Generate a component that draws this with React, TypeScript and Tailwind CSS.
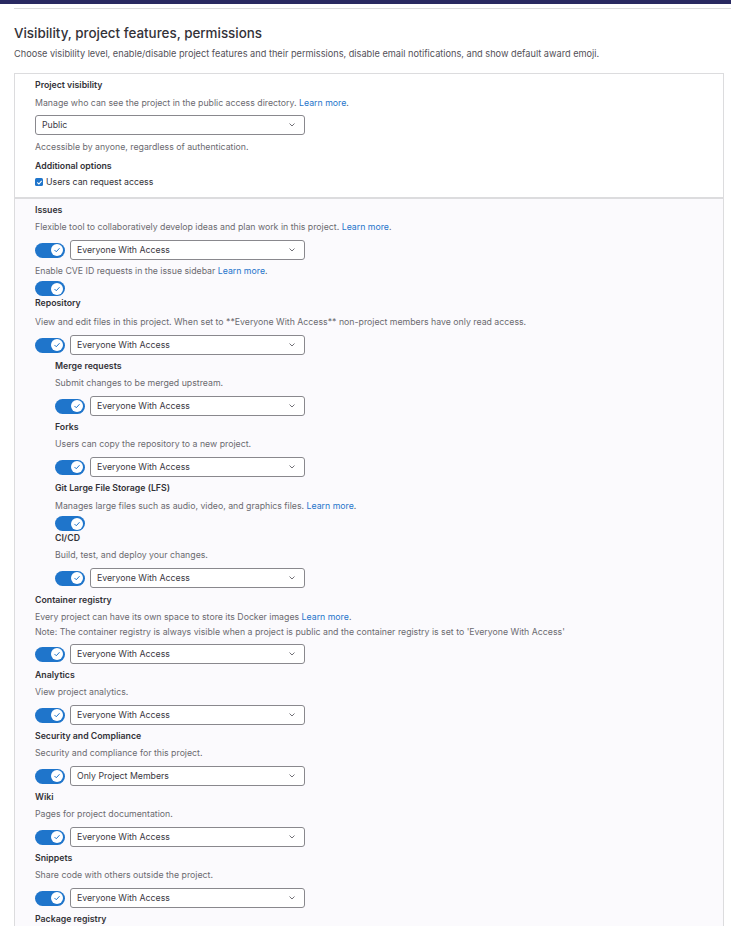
import React from "react";

const Check = () => (
  <svg width="8" height="8" viewBox="0 0 16 16" fill="none">
    <path d="M3.5 8.5l3 3 6-6.5" stroke="#1f75cb" strokeWidth="2" strokeLinecap="round" strokeLinejoin="round" />
  </svg>
);

const Toggle = () => (
  <span className="flex h-[15px] w-[30px] shrink-0 items-center justify-end rounded-full bg-[#1f75cb] pr-[2px]">
    <span className="flex h-[12px] w-[12px] items-center justify-center rounded-full bg-white">
      <Check />
    </span>
  </span>
);

const Chevron = () => (
  <svg width="6" height="4" viewBox="0 0 6 4" fill="none">
    <path d="M0.8 0.8L3 3L5.2 0.8" stroke="#626168" strokeWidth="0.9" strokeLinecap="round" strokeLinejoin="round" />
  </svg>
);

const Select = ({ value, w }: { value: string; w: string }) => (
  <div className={`flex h-[20px] items-center justify-between rounded-[3px] border border-[#89888d] bg-white pl-[6px] pr-[9px] text-[#3a383f] ${w}`}>
    <span>{value}</span>
    <Chevron />
  </div>
);

const Link = ({ children }: { children: React.ReactNode }) => (
  <span className="text-[#1f75cb]">{children}</span>
);

const Label = ({ children }: { children: React.ReactNode }) => (
  <div className="h-[12px] font-semibold text-[#333238]">{children}</div>
);

const Desc = ({ children, cls = "mt-[5px]" }: { children: React.ReactNode; cls?: string }) => (
  <div className={`h-[12px] text-[#6b6a70] ${cls}`}>{children}</div>
);

const Row = ({ value, nested }: { value: string; nested?: boolean }) => (
  <div className="mt-[7px] flex items-center gap-[5px]">
    <Toggle />
    <Select value={value} w={nested ? "w-[215px]" : "w-[235px]"} />
  </div>
);

const Feature = ({
  label,
  desc,
  value = "Everyone With Access",
  nested,
}: {
  label: string;
  desc: React.ReactNode;
  value?: string;
  nested?: boolean;
}) => (
  <div className="mt-[5px]">
    <Label>{label}</Label>
    <Desc>{desc}</Desc>
    <Row value={value} nested={nested} />
  </div>
);

export default function App() {
  return (
    <div
      className="min-h-[926px] bg-white text-[8.75px] leading-[12px]"
      style={{ fontFamily: "Inter, 'Noto Sans', sans-serif" }}
    >
      <div className="h-[4px] bg-[#292961]" />
      <div className="pl-[14px]">
        <div className="mt-[4px] border-t border-[#dcdcde]" />
        <div className="pr-[7px]">
          <h2 className="mt-[15px] text-[13.4px] font-medium leading-[18px] text-[#333238]">
            Visibility, project features, permissions
          </h2>
          <p className="mt-[6px] h-[12px] text-[9.2px] text-[#535158]">
            Choose visibility level, enable/disable project features and their permissions, disable email notifications, and show default award emoji.
          </p>
          <div className="mt-[13px] border border-[#dcdcde]">
            <div className="bg-white pb-[9px] pl-[20px] pt-[5px]">
              <Label>Project visibility</Label>
              <Desc cls="mt-[6px]">
                Manage who can see the project in the public access directory. <Link>Learn more</Link>.
              </Desc>
              <div className="mt-[6px]">
                <Select value="Public" w="w-[270px]" />
              </div>
              <Desc cls="mt-[6px]">Accessible by anyone, regardless of authentication.</Desc>
              <div className="mt-[7px]">
                <Label>Additional options</Label>
              </div>
              <div className="mt-[4px] flex h-[12px] items-center gap-[3px] text-[#333238]">
                <span className="flex h-[8px] w-[8px] items-center justify-center rounded-[1.5px] bg-[#1f75cb]">
                  <svg width="7" height="7" viewBox="0 0 16 16" fill="none">
                    <path d="M3.5 8.5l3 3 6-6.5" stroke="white" strokeWidth="2.4" strokeLinecap="round" strokeLinejoin="round" />
                  </svg>
                </span>
                <span>Users can request access</span>
              </div>
            </div>
            <div className="border-t-2 border-[#dcdcde] bg-[#fbfafd] pb-[20px] pl-[20px] pt-[0px]">
              <Feature
                label="Issues"
                desc={
                  <>
                    Flexible tool to collaboratively develop ideas and plan work in this project. <Link>Learn more</Link>.
                  </>
                }
              />
              <Desc cls="mt-[5px]">
                Enable CVE ID requests in the issue sidebar <Link>Learn more</Link>.
              </Desc>
              <div className="mt-[4px]">
                <Toggle />
              </div>
              <div className="mt-[1px]">
                <Label>Repository</Label>
                <Desc cls="mt-[7px]">
                  View and edit files in this project. When set to **Everyone With Access** non-project members have only read access.
                </Desc>
                <Row value="Everyone With Access" />
              </div>
              <div className="pl-[20px]">
                <Feature nested label="Merge requests" desc="Submit changes to be merged upstream." />
                <Feature nested label="Forks" desc="Users can copy the repository to a new project." />
                <div className="mt-[5px]">
                  <Label>Git Large File Storage (LFS)</Label>
                  <Desc cls="mt-[6px]">
                    Manages large files such as audio, video, and graphics files. <Link>Learn more</Link>.
                  </Desc>
                  <div className="mt-[4px]">
                    <Toggle />
                  </div>
                </div>
                <div className="mt-[1px]">
                  <Label>CI/CD</Label>
                  <Desc>Build, test, and deploy your changes.</Desc>
                  <Row nested value="Everyone With Access" />
                </div>
              </div>
              <div className="mt-[6px]">
                <Label>Container registry</Label>
                <Desc>
                  Every project can have its own space to store its Docker images <Link>Learn more</Link>.
                </Desc>
                <Desc cls="mt-[3px]">
                  Note: The container registry is always visible when a project is public and the container registry is set to 'Everyone With Access'
                </Desc>
                <div className="mt-[6px] flex items-center gap-[5px]">
                  <Toggle />
                  <Select value="Everyone With Access" w="w-[235px]" />
                </div>
              </div>
              <Feature label="Analytics" desc="View project analytics." />
              <Feature label="Security and Compliance" desc="Security and compliance for this project." value="Only Project Members" />
              <Feature label="Wiki" desc="Pages for project documentation." />
              <Feature label="Snippets" desc="Share code with others outside the project." />
              <div className="mt-[5px]">
                <Label>Package registry</Label>
              </div>
            </div>
          </div>
        </div>
      </div>
    </div>
  );
}
